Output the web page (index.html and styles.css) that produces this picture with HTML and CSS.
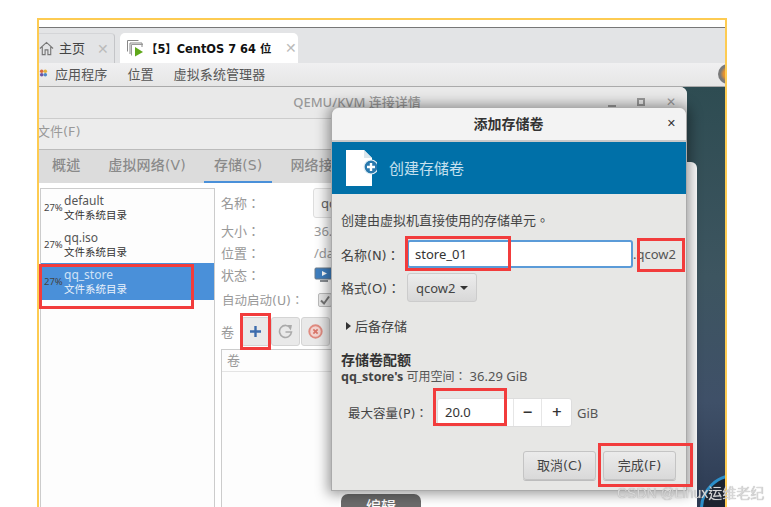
FILE: index.html
```html
<!DOCTYPE html>
<html lang="zh-Hant">
<head>
<meta charset="utf-8">
<title>添加存储卷</title>
<link rel="stylesheet" href="styles.css">
</head>
<body>
<div class="page">
  <div class="shot">
    <div class="strip"></div>
    <div class="tabbar">
      <div class="tab home">
        <svg class="ico-home" viewBox="0 0 16 16"><path d="M1 8 8 1.500 15 8M3.500 6.500V14.500H6.500V9.500H9.500V14.500H12.500V6.500" fill="none" stroke="#777" stroke-width="1.200"/></svg>
        <span class="home-text">主页</span>
        <span class="tab-x">✕</span>
      </div>
      <div class="tab active">
        <svg class="ico-vm" viewBox="0 0 17 17"><path d="M.5 11.500V.5H11.500M3 14V3H15V7" fill="none" stroke="#888"/><path d="M4.500 15.500V4.500H16" fill="none" stroke="#999"/><path d="M8 7 16 12 8 16.500Z" fill="#5fa81a"/></svg>
        <span class="vm-text">【5】CentOS 7 64 位</span>
        <span class="tab-x">✕</span>
      </div>
    </div>
    <div class="menubar">
      <svg class="ico-apps" viewBox="0 0 10 10"><circle cx="3" cy="3" r="2" fill="#d9683c"/><circle cx="7" cy="3" r="2" fill="#e3b23c"/><circle cx="3" cy="7" r="2" fill="#6a55a8"/><circle cx="7" cy="7" r="2" fill="#4f87c4"/></svg>
      <span class="menu-a">应用程序</span>
      <span class="menu-b">位置</span>
      <span class="menu-b">虚拟系统管理器</span>
      <span class="tray"></span>
    </div>
    <div class="desktop">
      <div class="disc"></div>

      <section class="mainwin">
        <header class="wintitle">
          <span>QEMU/KVM 连接详情</span>
          <div class="winctl"><i class="min"></i><i class="max"></i><b>✕</b></div>
        </header>
        <div class="winmenu">文件(F)</div>
        <div class="wingap"></div>
        <nav class="wintabs">
          <span>概述</span><span>虚拟网络(V)</span><span class="on">存储(S)</span><span>网络接口(N)</span>
        </nav>
        <div class="winbody">
          <ul class="pools">
            <li><em>27%</em><div><p>default</p><small>文件系统目录</small></div></li>
            <li><em>27%</em><div><p>qq.iso</p><small>文件系统目录</small></div></li>
            <li class="sel"><em>27%</em><div><p>qq_store</p><small>文件系统目录</small></div></li>
          </ul>
          <div class="details">
            <div class="row r-name"><label>名称：</label><span class="namebox">qq_store</span></div>
            <div class="row"><label>大小：</label><span>36.29 GiB</span></div>
            <div class="row"><label>位置：</label><span>/data/qq_store</span></div>
            <div class="row"><label>状态：</label>
              <svg class="ico-mon" viewBox="0 0 20 18"><rect x="1" y="1" width="18" height="11" rx="1" fill="#3f7fc0" stroke="#6b7a88"/><path d="M8 4 13 6.500 8 9Z" fill="#fff"/><rect x="6" y="13" width="8" height="2" fill="#8a8f94"/></svg>
            </div>
            <div class="row r-auto"><label class="wide">自动启动(U)：</label><span class="check"><svg viewBox="0 0 12 12"><path d="M2 6.500 5 9.500 10 2.500" fill="none" stroke="#777" stroke-width="2"/></svg></span></div>
            <div class="voltools">
              <label>卷</label>
              <span class="tbtn">
                <svg viewBox="0 0 12 12"><path d="M4.700 0H7.300V4.700H12V7.300H7.300V12H4.700V7.300H0V4.700H4.700Z" fill="#3d6cad"/></svg>
              </span>
              <span class="tbtn">
                <svg viewBox="0 0 14 14"><path d="M11.800 4A5.600 5.600 0 1 0 12.600 7.500H7" fill="none" stroke="#aaa" stroke-width="1.500"/><path d="M8.500 1 13 1 12 6Z" fill="#aaa"/></svg>
              </span>
              <span class="tbtn">
                <svg viewBox="0 0 14 14"><circle cx="7" cy="7" r="5.800" fill="#f3d4d0" stroke="#e08b80" stroke-width="1.800"/><path d="M5 5 9 9M9 5 5 9" stroke="#d9766a" stroke-width="1.600"/></svg>
              </span>
            </div>
            <div class="voltable"><div class="volhead">卷</div></div>
          </div>
        </div>
      </section>

      <section class="backwin">
        <div class="editbtn">编辑</div>
      </section>

      <section class="dialog">
        <header class="dlgtitle"><span>添加存储卷</span><b>✕</b></header>
        <div class="banner">
          <svg class="ico-doc" viewBox="0 0 32 37"><path d="M1 0H19L27 8V36H1Z" fill="#fff"/><path d="M19 0V8H27Z" fill="#dbe6ec"/><circle cx="26" cy="17" r="7" fill="#2a79ad" stroke="#e6f0f6" stroke-width="1.200"/><path d="M22 17H30M26 13V21" stroke="#fff" stroke-width="2.400"/></svg>
          <span>创建存储卷</span>
        </div>
        <div class="dlgbody">
          <p class="desc">创建由虚拟机直接使用的存储单元。</p>
          <div class="frow f-name">
            <label class="wide">名称(N)：</label>
            <span class="input">store_01</span>
            <span class="ext">.qcow2</span>
          </div>
          <div class="frow f-fmt">
            <label class="wide">格式(O)：</label>
            <span class="select">qcow2<i></i></span>
          </div>
          <div class="expander"><i></i>后备存储</div>
          <h3>存储卷配额</h3>
          <p class="space"><b>qq_store's</b> 可用空间： <span class="free">36.29 GiB</span></p>
          <div class="capacity">
            <label class="wide">最大容量(P)：</label>
            <div class="spin"><span class="val">20.0</span><span class="sb">−</span><span class="sb">+</span></div>
            <span class="unit">GiB</span>
          </div>
          <div class="actions">
            <span class="btn">取消(C)</span>
            <span class="btn">完成(F)</span>
          </div>
        </div>
      </section>
    </div>
  </div>

  <div class="mark m1"></div>
  <div class="mark m2"></div>
  <div class="mark m3"></div>
  <div class="mark m4"></div>
  <div class="mark m5"></div>
  <div class="mark m6"></div>
  <div class="watermark">CSDN @Linux运维老纪</div>
</div>
</body>
</html>
```
FILE: styles.css
```css
* { box-sizing: border-box; }
html, body { margin: 0; padding: 0; background: #fff; }
body {
  width: 771px; height: 507px; overflow: hidden;
  font-family: "Noto Sans", "Noto Sans CJK TC", sans-serif;
  font-size: 13px; color: #444;
}
.page { position: relative; width: 771px; height: 507px; overflow: hidden; filter: blur(.3px); }
p, h3, ul { margin: 0; padding: 0; }
i, em { font-style: normal; }
.wide, .wintabs, .winmenu, .btn { font-family: "DejaVu Sans", "Noto Sans CJK TC", sans-serif; }

.shot {
  position: absolute; left: 37px; top: 18px; width: 690px; height: 489px;
  border: solid #fdcb52; border-width: 2px 2px 0;
  display: flex; flex-direction: column; background: #fff;
}
.strip { height: 8px; flex: none; border-bottom: 1px solid #777; background: #fff; }

.tabbar { height: 35px; flex: none; display: flex; align-items: flex-end; background: #e3e4e6; overflow: hidden; }
.tab { height: 30px; display: flex; align-items: center; flex: none; }
.home { width: 76px; border-right: 1px solid #c4c5c8; border-top: 1px solid #d4d5d8; border-top-right-radius: 4px; }
.ico-home { width: 15px; height: 15px; flex: none; }
.home-text { margin: -3px 0 0 5px; font-size: 13px; color: #444; }
.tab-x { color: #bbb; font-size: 14px; font-family: "DejaVu Sans", sans-serif; }
.home .tab-x { margin-left: 12px; }
.active { width: 178px; margin-left: 5px; background: #fff; border-radius: 5px 5px 0 0; }
.ico-vm { width: 17px; height: 17px; margin-left: 7px; flex: none; }
.vm-text { margin: -1px 0 0 2px; width: 131px; font: bold 11.400px "DejaVu Sans", "Noto Sans CJK TC", sans-serif; color: #111; white-space: nowrap; }
.active .tab-x { margin-left: 8px; }

.menubar {
  height: 24px; flex: none; display: flex; align-items: center; position: relative; overflow: hidden; padding-bottom: 3px;
  background: linear-gradient(#f0f0f1, #e6e6e6); border-bottom: 1px solid #aaa;
}
.ico-apps { width: 9px; height: 10px; flex: none; }
.menu-a { margin-left: 7px; color: #555; letter-spacing: .1px; }
.menu-b { margin-left: 20px; color: #555; letter-spacing: .1px; }
.tray {
  position: absolute; left: 679px; top: 1px; width: 20px; height: 20px; border-radius: 50%;
  background: radial-gradient(circle at 50% 50%, #e8932e 0 30%, #7a7a7a 55%);
}

.desktop {
  flex: 1; position: relative; overflow: hidden;
  background: linear-gradient(#2e4c52, #3d5560 45%, #3f5068 75%, #2c3a52);
}
.disc {
  position: absolute; left: 661px; top: 387px; width: 70px; height: 70px; border-radius: 50%;
  background: #1c2430; border: 3px solid #2b8fc9;
}

.mainwin {
  position: absolute; left: 0; top: 0; bottom: 0; width: 648px;
  display: flex; flex-direction: column; background: #fff; border-top-right-radius: 7px; overflow: hidden;
}
.wintitle {
  height: 32px; flex: none; position: relative; text-align: center; line-height: 30px;
  background: #e9e9e9; border-bottom: 1px solid #ccc; color: #999; font-weight: 500; padding-right: 12px;
}
.winctl { position: absolute; right: 11px; top: 8px; display: flex; align-items: center; gap: 21px; }
.winctl b { font: bold 12px "DejaVu Sans", sans-serif; color: #999; }
.winctl .min { width: 8px; height: 2px; background: #999; margin-top: 8px; }
.winctl .max { width: 8px; height: 8px; border: 2px solid #999; }
.winmenu { height: 26px; flex: none; line-height: 26px; color: #999; background: #ececec; margin-left: -2px; }
.wingap { height: 5px; flex: none; background: #ececec; border-bottom: 1px solid #bbb; }
.wintabs {
  height: 33px; flex: none; display: flex; gap: 8px; padding-left: 3px; background: #dcdcdc;
  font-size: 14px; font-weight: 500; color: #8a8a8a; white-space: nowrap; letter-spacing: .15px;
}
.wintabs span { padding: 0 10px; line-height: 31px; }
.wintabs .on { border-bottom: 2px solid #4a90d9; }

.winbody { flex: 1; display: flex; align-items: stretch; padding: 5px 0 0 1px; background: #fff; min-height: 0; }
.pools {
  width: 175px; flex: none; list-style: none; background: #fdfdfd; border: 1px solid #ccc; border-bottom: 0;
}
.pools li { height: 37px; display: flex; align-items: center; color: #555; }
.pools em { width: 23px; padding-left: 3px; font-size: 9.500px; color: #444; flex: none; }
.pools p { font-size: 12px; line-height: 15px; }
.pools small { display: block; font-size: 10.500px; line-height: 14px; color: #333; }
.pools .sel { background: #4a90d9; }
.pools .sel p { color: #cfe2f6; }
.pools .sel small { color: #eaf2fb; }

.details { flex: 1; padding-left: 6px; display: flex; flex-direction: column; color: #999; min-width: 0; }
.details label { color: #999; }
.row { height: 22px; display: flex; align-items: center; white-space: nowrap; }
.row label { width: 93px; flex: none; margin-top: -2px; }
.r-name { height: 30px; margin-bottom: 2px; }
.namebox { width: 200px; height: 30px; border: 1px solid #ddd; border-radius: 3px; background: #f7f7f7; padding-left: 7px; line-height: 28px; color: #666; margin-left: -1px; }
.ico-mon { width: 20px; height: 18px; margin-top: 2px; }
.r-auto { height: 24px; margin-top: 2px; padding-left: 1px; }
.r-auto label { width: 96px; margin-top: -1px; font-size: 12.500px; }
.check { width: 14px; height: 14px; border: 1px solid #bbb; border-radius: 2px; background: #e8e8e8; display: flex; }
.voltools { display: flex; align-items: center; height: 29px; margin-top: 5px; }
.voltools label { width: 20px; flex: none; }
.tbtn { width: 29px; height: 29px; flex: none; margin-right: 1px; border: 1px solid #d4d4d4; border-radius: 3px; background: #e9e9e9; display: flex; align-items: center; justify-content: center; }
.tbtn svg { width: 11px; height: 11px; }
.tbtn + .tbtn svg { width: 15px; height: 15px; }
.voltable { margin-top: 3px; flex: 1; border: 1px solid #ccc; border-bottom: 0; background: #fdfdfd; }
.volhead { height: 22px; padding-left: 5px; line-height: 20px; border-bottom: 1px solid #e4e4e4; }

.backwin {
  position: absolute; left: 300px; top: 75px; right: 28px; bottom: 0; background: #fff; border-radius: 0 6px 0 0;
}
.editbtn {
  position: absolute; left: 2px; top: 332px; width: 80px; height: 30px; border-radius: 7px 7px 0 0;
  background: #6b6b6b; color: #fff; text-align: center; line-height: 24px; font-size: 15px; font-weight: 500;
}

.dialog {
  position: absolute; left: 292px; top: 21px; width: 356px; height: 383px;
  background: #e7e7e5; border: 1px solid #aaa; border-top: 0; border-radius: 7px 7px 0 0;
  display: flex; flex-direction: column; box-shadow: 0 0 13px 3px rgba(0,0,0,.4);
}
.dlgtitle {
  height: 34px; flex: none; position: relative; text-align: center; line-height: 31px; font-size: 14px; padding-right: 1px;
  background: #f3f3f3; border-bottom: 2px solid #c9c9c9; border-radius: 7px 7px 0 0; color: #333; font-weight: 700;
}
.dlgtitle b { position: absolute; right: 10px; top: 0; font: bold 11px/32px "DejaVu Sans", sans-serif; color: #333; }
.banner { height: 52px; flex: none; display: flex; align-items: center; background: #0070a8; }
.ico-doc { width: 32px; height: 37px; margin-left: 13px; flex: none; }
.banner span { margin: -2px 0 0 12px; font-size: 15px; color: #c5e0ee; }
.dlgbody { flex: 1; padding: 18px 0 0 9px; display: flex; flex-direction: column; position: relative; }
.desc { line-height: 17px; color: #444; }
.frow { display: flex; align-items: center; }
.frow label { width: 66px; flex: none; color: #444; letter-spacing: -.05px; white-space: nowrap; }
.f-name { margin-top: 11px; height: 28px; }
.input { width: 226px; height: 28px; border: 2px solid #5b9bd8; border-radius: 3px; background: #fff; line-height: 24px; padding-left: 6px; color: #333; flex: none; }
.ext { margin-left: 0; color: #555; }
.f-fmt { margin-top: 5px; height: 29px; }
.select {
  width: 70px; height: 29px; display: flex; align-items: center; padding-left: 8px; gap: 4px; color: #444;
  border: 1px solid #ccc; border-radius: 3px; background: linear-gradient(#ececec, #d8d8d8);
}
.select i { border: 4px solid transparent; border-top-color: #333; border-bottom: 0; }
.expander { margin-top: 15px; height: 18px; padding-left: 5px; line-height: 18px; display: flex; align-items: center; gap: 4px; color: #444; }
.expander i { border: 4px solid transparent; border-left: 5px solid #333; border-right: 0; }
.dlgbody h3 { margin-top: 16px; font-size: 14px; font-weight: 700; line-height: 17px; color: #333; }
.space { font-size: 12px; line-height: 17px; color: #555; white-space: nowrap; }
.space b { color: #444; font-size: 12.500px; }
.free { font-size: 13px; }
.capacity { margin-top: 13px; height: 29px; padding-left: 7px; display: flex; align-items: center; }
.capacity label { width: 89px; flex: none; color: #444; font-size: 12.500px; white-space: nowrap; }
.spin { width: 135px; height: 29px; display: flex; background: #fff; border: 1px solid #ddd; border-radius: 3px; flex: none; }
.val { width: 77px; padding-left: 7px; line-height: 27px; color: #333; border-right: 1px solid #e6e6e6; }
.sb { width: 29px; text-align: center; line-height: 26px; font-size: 17px; font-weight: 500; color: #333; border-right: 1px solid #e6e6e6; }
.sb:last-child { border: 0; }
.unit { margin-left: 5px; color: #555; }
.actions { margin-top: 24px; display: flex; justify-content: flex-end; gap: 7px; padding-right: 10px; }
.btn {
  width: 73px; height: 29px; line-height: 27px; text-align: center; color: #444;
  border: 1px solid #c4c4c4; border-radius: 3px; background: linear-gradient(#ebebeb, #d9d9d9); box-shadow: 0 1px 0 #bdbdbd;
}

.mark { position: absolute; border: 3px solid #f23c3c; }
.m1 { left: 39px; top: 264px; width: 155px; height: 45px; }
.m2 { left: 240px; top: 313px; width: 31px; height: 37px; }
.m3 { left: 405px; top: 236px; width: 106px; height: 35px; }
.m4 { left: 637px; top: 238px; width: 48px; height: 34px; }
.m5 { left: 433px; top: 388px; width: 74px; height: 38px; }
.m6 { left: 598px; top: 443px; width: 95px; height: 44px; }

.watermark {
  position: absolute; left: 617px; top: 483px; font: 14px/20px "Liberation Sans", "Noto Sans CJK TC", sans-serif;
  color: #d8d8d8; white-space: nowrap; text-shadow: 0 0 1px #999;
}
```
